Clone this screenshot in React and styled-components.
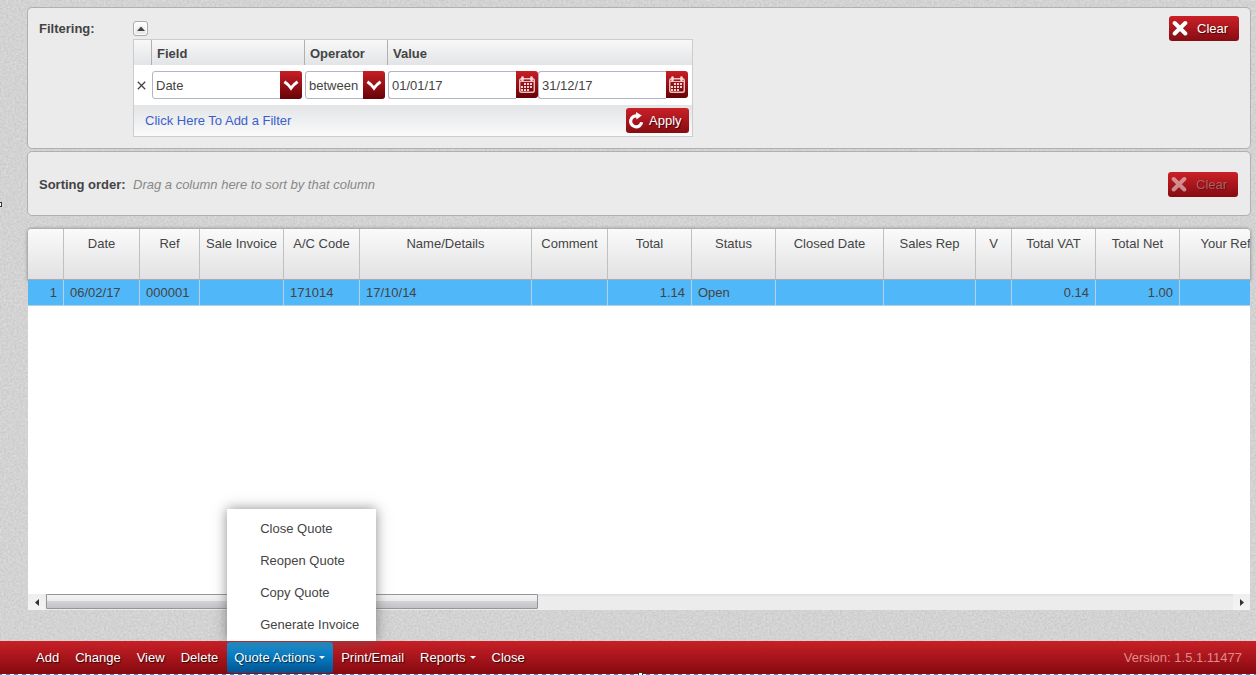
//React librairies
import React, { useState } from "react";
import styled, { createGlobalStyle } from "styled-components";

//Data
const columns = [
  { key: "line", label: "", width: 36, align: "right" },
  { key: "date", label: "Date", width: 76 },
  { key: "ref", label: "Ref", width: 60 },
  { key: "saleInvoice", label: "Sale Invoice", width: 84 },
  { key: "account", label: "A/C Code", width: 76 },
  { key: "details", label: "Name/Details", width: 172 },
  { key: "comment", label: "Comment", width: 76 },
  { key: "total", label: "Total", width: 84, align: "right" },
  { key: "status", label: "Status", width: 84 },
  { key: "closedDate", label: "Closed Date", width: 108 },
  { key: "salesRep", label: "Sales Rep", width: 92 },
  { key: "v", label: "V", width: 36 },
  { key: "totalVat", label: "Total VAT", width: 84, align: "right" },
  { key: "totalNet", label: "Total Net", width: 84, align: "right" },
  { key: "yourRef", label: "Your Ref", width: 92 },
];

const quotes = [
  {
    line: "1",
    date: "06/02/17",
    ref: "000001",
    account: "171014",
    details: "17/10/14",
    total: "1.14",
    status: "Open",
    totalVat: "0.14",
    totalNet: "1.00",
  },
];

const quoteActions = ["Close Quote", "Reopen Quote", "Copy Quote", "Generate Invoice"];

//Icons
const CrossIcon = () => (
  <svg width="16" height="18" viewBox="0 0 16 18" aria-hidden="true">
    <path d="M3 4 13 15M13 4 3 15" stroke="#333" strokeOpacity=".45" strokeWidth="4" strokeLinecap="round" />
    <path d="M2.7 3 13.3 13.5M13.3 3 2.7 13.5" stroke="#fff" strokeWidth="4" strokeLinecap="round" />
  </svg>
);

const ReloadIcon = () => (
  <svg width="16" height="18" viewBox="0 0 16 18" aria-hidden="true">
    <path d="M8.5 4A5.5 5.5 0 1 0 12.6 10.2" fill="none" stroke="#fff" strokeWidth="3.2" />
    <path d="M7 0 12.8 3.6 7.5 7.6Z" fill="#fff" />
  </svg>
);

const ChevronIcon = () => (
  <svg width="16" height="12" viewBox="0 0 16 12" aria-hidden="true">
    <path d="M1.4 2.8C4 4.5 6 6.5 8 9.2 10 6.5 12 4.5 14.6 2.8" fill="none" stroke="#fff" strokeWidth="3" />
  </svg>
);

const CalendarIcon = () => (
  <svg width="18" height="18" viewBox="0 0 18 18" aria-hidden="true">
    <rect x="1.7" y="2.7" width="14.6" height="13.6" rx="1.8" fill="none" stroke="#ecc0c0" strokeWidth="1.4" />
    <path d="M2 5.5H16" stroke="#ecc0c0" strokeWidth="1" />
    <path d="M4.5 1.6V4M13.5 1.6V4" stroke="#f6dada" strokeWidth="2.6" strokeLinecap="round" />
    <path fill="#f3d3d3" d="M6 7h2v2H6zM9 7h2v2H9zM12 7h2v2h-2zM3 10h2v2H3zM6 10h2v2H6zM9 10h2v2H9zM12 10h2v2h-2zM3 13h2v2H3zM6 13h2v2H6zM9 13h2v2H9z" />
  </svg>
);

const RemoveIcon = () => (
  <svg width="9" height="9" viewBox="0 0 9 9" aria-hidden="true">
    <path d="M.8.8 8.2 8.2M8.2.8.8 8.2" stroke="#444" strokeWidth="1.3" />
  </svg>
);

function Combo({ id, label, value, options, width }) {
  const [selected, setSelected] = useState(value);

  return (
    <Field $width={width}>
      <Select id={id} aria-label={label} value={selected} onChange={(e) => setSelected(e.target.value)}>
        {options.map((option) => (
          <option key={option}>{option}</option>
        ))}
      </Select>
      <Arrow><ChevronIcon /></Arrow>
    </Field>
  );
}

function DateField({ label, value }) {
  return (
    <Field $width={150}>
      <DateInput type="text" aria-label={label} defaultValue={value} />
      <DateButton type="button" aria-label={`Pick ${label}`}><CalendarIcon /></DateButton>
    </Field>
  );
}

function Filters() {
  return (
    <Panel>
      <PanelTitle>Filtering:</PanelTitle>
      <FilterArea>
        <Collapse type="button" aria-label="Collapse">
          <svg width="8" height="5" viewBox="0 0 8 5"><path d="M0 5 4 .5 8 5Z" fill="#444" /></svg>
        </Collapse>
        <FilterTable>
          <thead>
            <tr>
              <FilterHead $width={18} />
              <FilterHead $width={153}>Field</FilterHead>
              <FilterHead $width={83}>Operator</FilterHead>
              <FilterHead>Value</FilterHead>
            </tr>
          </thead>
          <tbody>
            <tr>
              <FilterCell><Remove type="button" aria-label="Remove filter"><RemoveIcon /></Remove></FilterCell>
              <FilterCell><Combo id="field" label="Field" value="Date" options={["Date", "Ref", "Status"]} width={150} /></FilterCell>
              <FilterCell><Combo id="operator" label="Operator" value="between" options={["between", "equals"]} width={80} /></FilterCell>
              <FilterCell>
                <Dates>
                  <DateField label="from date" value="01/01/17" />
                  <DateField label="to date" value="31/12/17" />
                </Dates>
              </FilterCell>
            </tr>
          </tbody>
          <tfoot>
            <tr>
              <FilterFoot colSpan={4}>
                <FootRow>
                  <AddLink href="#">Click Here To Add a Filter</AddLink>
                  <RedButton type="button" $compact><ReloadIcon /><span>Apply</span></RedButton>
                </FootRow>
              </FilterFoot>
            </tr>
          </tfoot>
        </FilterTable>
      </FilterArea>
      <RedButton type="button"><CrossIcon /><span>Clear</span></RedButton>
    </Panel>
  );
}

function QuoteGrid() {
  const tableWidth = columns.reduce((sum, column) => sum + column.width, 0);

  return (
    <Grid>
      <GridView>
        <GridTable style={{ width: tableWidth }}>
          <colgroup>
            {columns.map((column) => (
              <col key={column.key} style={{ width: column.width }} />
            ))}
          </colgroup>
          <thead>
            <tr>
              {columns.map((column) => (
                <HeadCell key={column.key}>{column.label}</HeadCell>
              ))}
            </tr>
          </thead>
          <tbody>
            {quotes.map((quote) => (
              <tr key={quote.ref}>
                {columns.map((column) => (
                  <Cell key={column.key} $align={column.align}>{quote[column.key]}</Cell>
                ))}
              </tr>
            ))}
          </tbody>
        </GridTable>
      </GridView>
      <Scrollbar>
        <ScrollButton type="button" aria-label="Scroll left">
          <svg width="4" height="7" viewBox="0 0 4 7"><path d="M4 0V7L0 3.5Z" fill="#333" /></svg>
        </ScrollButton>
        <Thumb />
        <Track />
        <ScrollButton type="button" aria-label="Scroll right">
          <svg width="4" height="7" viewBox="0 0 4 7"><path d="M0 0V7L4 3.5Z" fill="#333" /></svg>
        </ScrollButton>
      </Scrollbar>
    </Grid>
  );
}

function Toolbar() {
  //Use state
  const [menuOpen, setMenuOpen] = useState(true);

  return (
    <Bar>
      <BarButton type="button">Add</BarButton>
      <BarButton type="button">Change</BarButton>
      <BarButton type="button">View</BarButton>
      <BarButton type="button">Delete</BarButton>
      <MenuHolder>
        <BarButton type="button" $active={menuOpen} aria-expanded={menuOpen} onClick={() => setMenuOpen(!menuOpen)}>
          Quote Actions<Caret />
        </BarButton>
        {menuOpen && (
          <Menu>
            {quoteActions.map((action) => (
              <li key={action}><MenuItem type="button">{action}</MenuItem></li>
            ))}
          </Menu>
        )}
      </MenuHolder>
      <BarButton type="button">Print/Email</BarButton>
      <BarButton type="button">Reports<Caret /></BarButton>
      <BarButton type="button">Close</BarButton>
      <Version>Version: 1.5.1.11477</Version>
    </Bar>
  );
}

function App() {
  return (
    <Page>
      <GlobalStyle />
      <Texture aria-hidden="true">
        <filter id="grain" colorInterpolationFilters="sRGB">
          <feTurbulence type="fractalNoise" baseFrequency="0.47" numOctaves="3" seed="4" />
          <feColorMatrix values="0.12 0 0 0 0.765  0.12 0 0 0 0.765  0.12 0 0 0 0.765  0 0 0 0 1" />
        </filter>
        <rect width="100%" height="100%" filter="url(#grain)" />
      </Texture>
      <Content>
        <Filters />
        <Panel $sorting>
          <PanelTitle>Sorting order:</PanelTitle>
          <Hint>Drag a column here to sort by that column</Hint>
          <RedButton type="button" disabled><CrossIcon /><span>Clear</span></RedButton>
        </Panel>
        <QuoteGrid />
      </Content>
      <Toolbar />
      <Selection />
      <Handle $side="left" />
      <Handle $side="bottom" />
    </Page>
  );
}

export default App;

const GlobalStyle = createGlobalStyle`
  * {
    box-sizing: border-box;
  }

  body {
    margin: 0;
    background: #d3d3d3;
    color: #444;
    font-family: "Liberation Sans", Arial, sans-serif;
    font-size: 13px;
    line-height: 16px;
  }

  button, input, select {
    font: inherit;
    color: inherit;
    margin: 0;
  }

  svg {
    flex: none;
  }
`;

const Page = styled.div`
  position: relative;
  display: flex;
  flex-direction: column;
  min-height: 100vh;
  overflow: hidden;
`;

const Texture = styled.svg`
  position: absolute;
  inset: 0;
  width: 100%;
  height: 100%;
`;

const Content = styled.main`
  position: relative;
  flex: 1;
  display: flex;
  flex-direction: column;
  gap: 2px;
  padding: 7px 5px 31px 27px;
`;

const Panel = styled.section`
  display: flex;
  align-items: ${props => props.$sorting ? "center" : "flex-start"};
  min-height: ${props => props.$sorting ? "65px" : "142px"};
  padding: ${props => props.$sorting ? "2px 12px 0 11px" : "8px 11px"};
  background: #ebebeb;
  border: 1px solid #b0b0b0;
  border-radius: 5px;
`;

const PanelTitle = styled.h2`
  width: 94px;
  margin: 0;
  padding: 5px 0;
  font-size: 13px;
  white-space: nowrap;
`;

const Hint = styled.p`
  flex: 1;
  margin: 0;
  color: #888;
  font-style: italic;
`;

const FilterArea = styled.div`
  flex: 1;
  padding-top: 5px;
`;

const Collapse = styled.button`
  display: flex;
  align-items: center;
  justify-content: center;
  width: 15px;
  height: 15px;
  margin-bottom: 3px;
  padding: 0;
  background: linear-gradient(#fff, #e4e4e4);
  border: 1px solid #aaa;
  border-radius: 3px;
  box-shadow: inset 0 0 0 1px #fff;
`;

const FilterTable = styled.table`
  width: 560px;
  table-layout: fixed;
  border-collapse: separate;
  border-spacing: 0;
  background: #fff;
  border: 1px solid #ccc;
`;

const FilterHead = styled.th`
  width: ${props => props.$width ? `${props.$width}px` : "auto"};
  height: 25px;
  padding: 2px 5px 0;
  text-align: left;
  background: linear-gradient(#f8f8f8, #e2e4e6);
  border-right: 1px solid #b0b0b0;

  &:last-child {
    border-right: 0;
  }
`;

const FilterCell = styled.td`
  height: 40px;
  padding: 0;
`;

const FilterFoot = styled.td`
  height: 31px;
  padding: 0 3px 0 11px;
  background: linear-gradient(#e2e4e6, #fafafa);
`;

const FootRow = styled.div`
  display: flex;
  align-items: center;
  justify-content: space-between;
`;

const Remove = styled.button`
  display: flex;
  padding: 3px;
  background: none;
  border: 0;
`;

const Dates = styled.div`
  display: flex;
`;

const Field = styled.div`
  position: relative;
  display: flex;
  width: ${props => props.$width}px;
  height: 28px;
`;

const Select = styled.select`
  appearance: none;
  width: 100%;
  padding: 2px 22px 0 3px;
  background: #fff;
  border: 1px solid #b4b4c6;
  border-radius: 3px;
`;

const Arrow = styled.span`
  position: absolute;
  top: 0;
  right: 0;
  bottom: 0;
  display: flex;
  align-items: center;
  justify-content: center;
  width: 22px;
  background: linear-gradient(#c91f26, #650307);
  border-radius: 0 3px 3px 0;
  pointer-events: none;
`;

const DateInput = styled.input`
  flex: 1;
  min-width: 0;
  padding: 2px 3px 0;
  background: #fff;
  border: 1px solid #b4b4c6;
  border-right: 0;
  border-radius: 3px 0 0 3px;
`;

const DateButton = styled.button`
  display: flex;
  align-items: center;
  justify-content: center;
  width: 22px;
  height: 27px;
  padding: 0;
  background: linear-gradient(#c91f26, #650307);
  border: 0;
  border-radius: 0 3px 3px 0;
`;

const AddLink = styled.a`
  color: #3a5fcd;
  text-decoration: none;
`;

const RedButton = styled.button`
  display: flex;
  align-items: center;
  gap: ${props => props.$compact ? "4px" : "9px"};
  width: ${props => props.$compact ? "63px" : "70px"};
  height: 25px;
  padding: 0 3px;
  color: #fff;
  background: linear-gradient(#cb2027, #860c12);
  border: 0;
  border-radius: 3px;
  text-shadow: 1px 1px 1px rgba(0,0,0,.6);

  &:disabled > * {
    opacity: .5;
  }

  &:disabled span {
    color: #aaa;
  }
`;

const Grid = styled.section`
  position: relative;
  flex: 1;
  display: flex;
  flex-direction: column;
  margin: 11px 1px 0;

  &::before {
    content: "";
    position: absolute;
    top: 0;
    left: 0;
    right: 0;
    height: 51px;
    border-radius: 4px 4px 0 0;
    box-shadow: 0 0 3px 1px #999;
  }
`;

const GridView = styled.div`
  position: relative;
  flex: 1;
  overflow: hidden;
  background: #fff;
  border-radius: 4px 4px 0 0;
`;

const GridTable = styled.table`
  table-layout: fixed;
  border-collapse: separate;
  border-spacing: 0;
`;

const HeadCell = styled.th`
  height: 51px;
  padding: 7px 0 0;
  font-weight: 400;
  vertical-align: top;
  white-space: nowrap;
  background: linear-gradient(#fafafa, #e1e1e3);
  border-right: 1px solid #c0c0c0;
  border-bottom: 1px solid #aaa;
`;

const Cell = styled.td`
  height: 26px;
  padding: 0 6px;
  text-align: ${props => props.$align || "left"};
  background: #50b7f8;
  border-right: 1px solid #b5d2e4;
  border-bottom: 1px solid #b5d2e4;
`;

const Scrollbar = styled.div`
  position: relative;
  display: flex;
  height: 16px;
  background: linear-gradient(#dcdcdc, #ececec 3px);
`;

const ScrollButton = styled.button`
  display: flex;
  align-items: center;
  justify-content: center;
  width: 17px;
  padding: 0;
  background: linear-gradient(#eee, #f4f4f4);
  border: 0;
`;

const Thumb = styled.div`
  flex: 491;
  height: 15px;
  margin-left: 1px;
  background: linear-gradient(#f4f4f5, #ebebed 45%, #d3d3d6 50%, #c3c3c7);
  border: 1px solid #959595;
  border-radius: 1px;
`;

const Track = styled.div`
  flex: 697;
`;

const Bar = styled.nav`
  position: relative;
  display: flex;
  align-items: stretch;
  height: 33px;
  padding: 0 14px 0 28px;
  background: linear-gradient(#c92027, #850a10);
`;

const BarButton = styled.button`
  display: flex;
  align-items: center;
  height: 31px;
  margin: 1px 0 1px 1px;
  padding: 0 8px 0 7px;
  color: #fff;
  background: ${props => props.$active ? "linear-gradient(#1c93d4, #0576bd 55%, #03528d)" : "none"};
  border: 0;
  border-radius: 3px;
  text-shadow: 1px 1px 1px rgba(0,0,0,.7);
  white-space: nowrap;
`;

const Caret = styled.span`
  margin-left: 4px;
  border: 3px solid transparent;
  border-top-color: #fff;
  border-bottom: 0;
`;

const MenuHolder = styled.div`
  position: relative;
`;

const Menu = styled.ul`
  position: absolute;
  bottom: 100%;
  left: 1px;
  width: 149px;
  margin: 0;
  padding: 4px 0 0;
  list-style: none;
  background: #fff;
  box-shadow: 0 0 12px rgba(90,90,90,.7);
`;

const MenuItem = styled.button`
  display: block;
  width: 100%;
  height: 32px;
  padding: 0 0 0 33px;
  text-align: left;
  background: none;
  border: 0;
`;

const Version = styled.span`
  align-self: center;
  margin-left: auto;
  color: #e08a8d;
`;

const Selection = styled.div`
  position: relative;
  height: 1px;
  background: repeating-linear-gradient(90deg, #2f8fe8 0 2px, #fff 2px 6px, #2f8fe8 6px 8px);
`;

const Handle = styled.span`
  position: absolute;
  width: 5px;
  height: 5px;
  background: #fff;
  border: 1px solid #333;
  ${props => props.$side === "left" ? "left: -3px; top: 202px;" : "left: calc(51% - 3px); bottom: -2px;"}
`;
